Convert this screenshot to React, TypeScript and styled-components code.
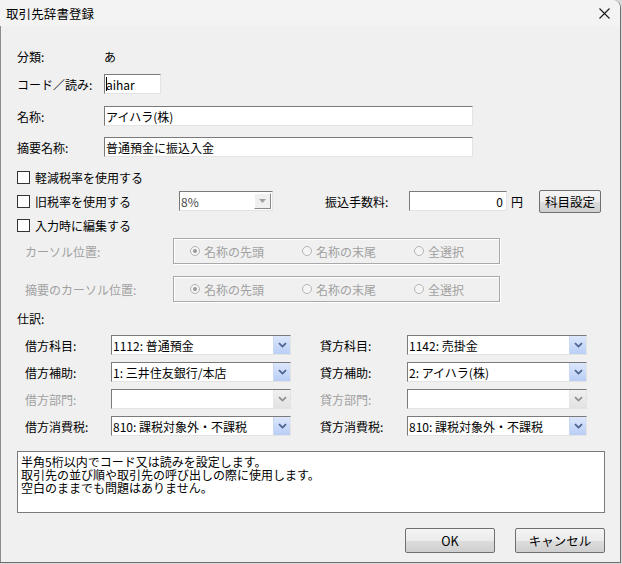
import React from 'react';
import styled, { createGlobalStyle, css } from 'styled-components';

const GlobalStyle = createGlobalStyle`
  html, body {
    margin: 0;
    padding: 0;
    background: #d9d9d9;
  }
  body {
    font-family: "Noto Sans CJK JP", "Noto Sans", sans-serif;
    font-size: 12px;
    color: #000;
  }
`;

const Window = styled.div`
  width: 620px;
  height: 562px;
  background: #f0f0f0;
  border-right: 1px solid #6e6e6e;
  border-bottom: 1px solid #6e6e6e;
  border-top-right-radius: 8px;
  box-shadow: inset 1px 0 0 #8c8c8c;
  overflow: hidden;
  display: flex;
  flex-direction: column;
`;

const TitleBar = styled.div`
  height: 26px;
  background: #f3f3f3;
  display: flex;
  align-items: center;
  justify-content: space-between;
  padding: 0 8px 0 6px;
`;

const Title = styled.span`
  font-size: 12.5px;
  letter-spacing: 0.1px;
`;

const CloseButton = styled.div`
  width: 16px;
  height: 16px;
  display: flex;
  align-items: center;
  justify-content: center;
`;

const Body = styled.div`
  padding: 0 15px 0 17px;
  display: flex;
  flex-direction: column;
`;

const Row = styled.div<{ $mt: number; $h: number; $indent?: number }>`
  display: flex;
  align-items: center;
  margin-top: ${({ $mt }) => $mt}px;
  height: ${({ $h }) => $h}px;
  padding-left: ${({ $indent }) => $indent ?? 0}px;
`;

const Label = styled.span<{ $w: number; $disabled?: boolean; $ml?: number }>`
  width: ${({ $w }) => $w}px;
  margin-left: ${({ $ml }) => $ml ?? 0}px;
  flex-shrink: 0;
  white-space: nowrap;
  color: ${({ $disabled }) => ($disabled ? '#a0a0a0' : '#000')};
`;

const sunken = css`
  box-sizing: border-box;
  background: #fff;
  border-top: 1px solid #7a7a7a;
  border-left: 1px solid #7a7a7a;
  border-right: 1px solid #e3e3e3;
  border-bottom: 1px solid #e3e3e3;
`;

const TextBox = styled.div<{ $w: number; $align?: 'left' | 'right' }>`
  ${sunken};
  width: ${({ $w }) => $w}px;
  height: 20px;
  padding: 0 3px 0 1px;
  display: flex;
  align-items: center;
  justify-content: ${({ $align }) => ($align === 'right' ? 'flex-end' : 'flex-start')};
  white-space: nowrap;
  overflow: hidden;
  flex-shrink: 0;
`;

const Caret = styled.span`
  display: inline-block;
  width: 1px;
  height: 14px;
  background: #000;
  margin-right: -1px;
`;

const Yen = styled.span`
  margin-left: 4px;
  width: 12px;
`;

const CheckBoxWrap = styled.label<{ $w?: number }>`
  display: flex;
  align-items: center;
  width: ${({ $w }) => ($w ? `${$w}px` : 'auto')};
  flex-shrink: 0;
  white-space: nowrap;
`;

const CheckBox = styled.span`
  width: 13px;
  height: 13px;
  box-sizing: border-box;
  border: 1px solid #333;
  background: #fff;
  margin-right: 5px;
`;

const Combo = styled.div<{ $w: number }>`
  ${sunken};
  width: ${({ $w }) => $w}px;
  height: 20px;
  display: flex;
  align-items: stretch;
  background: #fff;
  flex-shrink: 0;
`;

const ComboText = styled.span<{ $grey?: boolean }>`
  flex: 1;
  display: flex;
  align-items: center;
  padding-left: 1px;
  white-space: nowrap;
  overflow: hidden;
  color: ${({ $grey }) => ($grey ? '#4a4a4a' : '#000')};
`;

const ComboArrow = styled.span<{ $variant: 'blue' | 'grey' | 'classic' }>`
  width: 17px;
  display: flex;
  align-items: center;
  justify-content: center;
  box-sizing: border-box;
  ${({ $variant }) =>
    $variant === 'blue'
      ? css`
          background: linear-gradient(#dce7fb, #b9cef6);
          border-left: 1px solid #c9d8f5;
        `
      : $variant === 'grey'
      ? css`
          background: linear-gradient(#f0f0f0, #e2e2e2);
          border-left: 1px solid #e6e6e6;
        `
      : css`
          margin: 1px;
          background: #f0f0f0;
          border-top: 1px solid #fff;
          border-left: 1px solid #fff;
          border-right: 1px solid #8a8a8a;
          border-bottom: 1px solid #8a8a8a;
        `}
`;

const PushButton = styled.button<{ $w: number; $h: number; $ml?: number }>`
  width: ${({ $w }) => $w}px;
  height: ${({ $h }) => $h}px;
  margin-left: ${({ $ml }) => $ml ?? 0}px;
  padding: 0;
  font: inherit;
  font-size: 12.5px;
  color: #000;
  border: 1px solid #707070;
  border-radius: 2px;
  background: linear-gradient(#f4f4f4 0%, #ebebeb 50%, #dddddd 51%, #cfcfcf 100%);
  flex-shrink: 0;
`;

const GroupBox = styled.div<{ $w: number }>`
  box-sizing: border-box;
  width: ${({ $w }) => $w}px;
  height: 26px;
  border: 1px solid #a9a9a9;
  box-shadow: inset 1px 1px 0 #fff, 1px 1px 0 #fff;
  display: flex;
  align-items: center;
  padding-left: 16px;
  overflow: hidden;
`;

const RadioItem = styled.span`
  display: flex;
  align-items: center;
  width: 112px;
  flex-shrink: 0;
  color: #a0a0a0;
  white-space: nowrap;
  &:last-child {
    width: auto;
  }
`;

const RadioCircle = styled.span<{ $checked?: boolean }>`
  width: 10px;
  height: 10px;
  box-sizing: border-box;
  border-radius: 50%;
  border: 1px solid #b4b4b4;
  background: #f4f4f4;
  margin-right: 4px;
  display: flex;
  align-items: center;
  justify-content: center;
  &::after {
    content: '';
    display: ${({ $checked }) => ($checked ? 'block' : 'none')};
    width: 4px;
    height: 4px;
    border-radius: 50%;
    background: #9a9a9a;
  }
`;

const JournalGrid = styled.div`
  display: grid;
  grid-template-columns: 86px 180px 29px 87px 180px;
  grid-auto-rows: 20px;
  row-gap: 7px;
  align-items: center;
  margin-top: 7px;
  padding-left: 8px;
`;

const Spacer = styled.span``;

const MessageBox = styled.div`
  box-sizing: border-box;
  margin-top: 15px;
  width: 588px;
  height: 62px;
  background: #fff;
  border: 1px solid #7a7a7a;
  padding: 3px 3px 0 3px;
  font-size: 12px;
  line-height: 13px;
  white-space: pre-line;
`;

const ButtonBar = styled.div`
  display: flex;
  justify-content: flex-end;
  gap: 20px;
  margin-top: 15px;
  width: 588px;
`;

const Chevron = ({ color }: { color: string }) => (
  <svg width="9" height="6" viewBox="0 0 9 6">
    <path d="M1 1.2 L4.5 4.6 L8 1.2" fill="none" stroke={color} strokeWidth="1.8" />
  </svg>
);

const Triangle = () => (
  <svg width="7" height="4" viewBox="0 0 7 4">
    <path d="M0 0 H7 L3.5 4 Z" fill="#a0a0a0" />
  </svg>
);

const Check = ({ label, width }: { label: string; width?: number }) => (
  <CheckBoxWrap $w={width}>
    <CheckBox />
    {label}
  </CheckBoxWrap>
);

const Select = ({ value, disabled }: { value: string; disabled?: boolean }) => (
  <Combo $w={180}>
    <ComboText>{value}</ComboText>
    <ComboArrow $variant={disabled ? 'grey' : 'blue'}>
      <Chevron color={disabled ? '#8f8f8f' : '#4d6390'} />
    </ComboArrow>
  </Combo>
);

const CursorOptions = () => (
  <GroupBox $w={327}>
    <RadioItem>
      <RadioCircle $checked />
      名称の先頭
    </RadioItem>
    <RadioItem>
      <RadioCircle />
      名称の末尾
    </RadioItem>
    <RadioItem>
      <RadioCircle />
      全選択
    </RadioItem>
  </GroupBox>
);

const journalRows = [
  { left: '借方科目:', lv: '1112: 普通預金', right: '貸方科目:', rv: '1142: 売掛金' },
  { left: '借方補助:', lv: '1: 三井住友銀行/本店', right: '貸方補助:', rv: '2: アイハラ(株)' },
  { left: '借方部門:', lv: '', right: '貸方部門:', rv: '', disabled: true },
  { left: '借方消費税:', lv: '810: 課税対象外・不課税', right: '貸方消費税:', rv: '810: 課税対象外・不課税' },
];

const App: React.FC = () => {
  return (
    <>
      <GlobalStyle />
      <Window>
        <TitleBar>
          <Title>取引先辞書登録</Title>
          <CloseButton>
            <svg width="11" height="11" viewBox="0 0 11 11">
              <path d="M0.5 0.5 L10.5 10.5 M10.5 0.5 L0.5 10.5" stroke="#1a1a1a" strokeWidth="1.1" />
            </svg>
          </CloseButton>
        </TitleBar>
        <Body>
          <Row $mt={20} $h={20}>
            <Label $w={87}>分類:</Label>
            <span>あ</span>
          </Row>
          <Row $mt={8} $h={20}>
            <Label $w={87}>コード／読み:</Label>
            <TextBox $w={57}>
              <Caret />
              aihar
            </TextBox>
          </Row>
          <Row $mt={12} $h={20}>
            <Label $w={87}>名称:</Label>
            <TextBox $w={369}>アイハラ(株)</TextBox>
          </Row>
          <Row $mt={11} $h={20}>
            <Label $w={87}>摘要名称:</Label>
            <TextBox $w={369}>普通預金に振込入金</TextBox>
          </Row>

          <Row $mt={8} $h={24}>
            <Check label="軽減税率を使用する" />
          </Row>
          <Row $mt={0} $h={24}>
            <Check label="旧税率を使用する" width={162} />
            <Combo $w={94}>
              <ComboText $grey>8%</ComboText>
              <ComboArrow $variant="classic">
                <Triangle />
              </ComboArrow>
            </Combo>
            <Label $w={84} $ml={52}>振込手数料:</Label>
            <TextBox $w={98} $align="right">0</TextBox>
            <Yen>円</Yen>
            <PushButton $w={62} $h={23} $ml={16}>科目設定</PushButton>
          </Row>
          <Row $mt={0} $h={24}>
            <Check label="入力時に編集する" />
          </Row>

          <Row $mt={1} $h={26} $indent={8}>
            <Label $w={148} $disabled>カーソル位置:</Label>
            <CursorOptions />
          </Row>
          <Row $mt={12} $h={26} $indent={8}>
            <Label $w={148} $disabled>摘要のカーソル位置:</Label>
            <CursorOptions />
          </Row>

          <Row $mt={6} $h={20}>
            <Label $w={60}>仕訳:</Label>
          </Row>
          <JournalGrid>
            {journalRows.map((r) => (
              <React.Fragment key={r.left}>
                <Label $w={86} $disabled={r.disabled}>{r.left}</Label>
                <Select value={r.lv} disabled={r.disabled} />
                <Spacer />
                <Label $w={87} $disabled={r.disabled}>{r.right}</Label>
                <Select value={r.rv} disabled={r.disabled} />
              </React.Fragment>
            ))}
          </JournalGrid>

          <MessageBox>
            {'半角5桁以内でコード又は読みを設定します。\n取引先の並び順や取引先の呼び出しの際に使用します。\n空白のままでも問題はありません。'}
          </MessageBox>

          <ButtonBar>
            <PushButton $w={90} $h={25}>OK</PushButton>
            <PushButton $w={90} $h={25}>キャンセル</PushButton>
          </ButtonBar>
        </Body>
      </Window>
    </>
  );
};

export default App;
